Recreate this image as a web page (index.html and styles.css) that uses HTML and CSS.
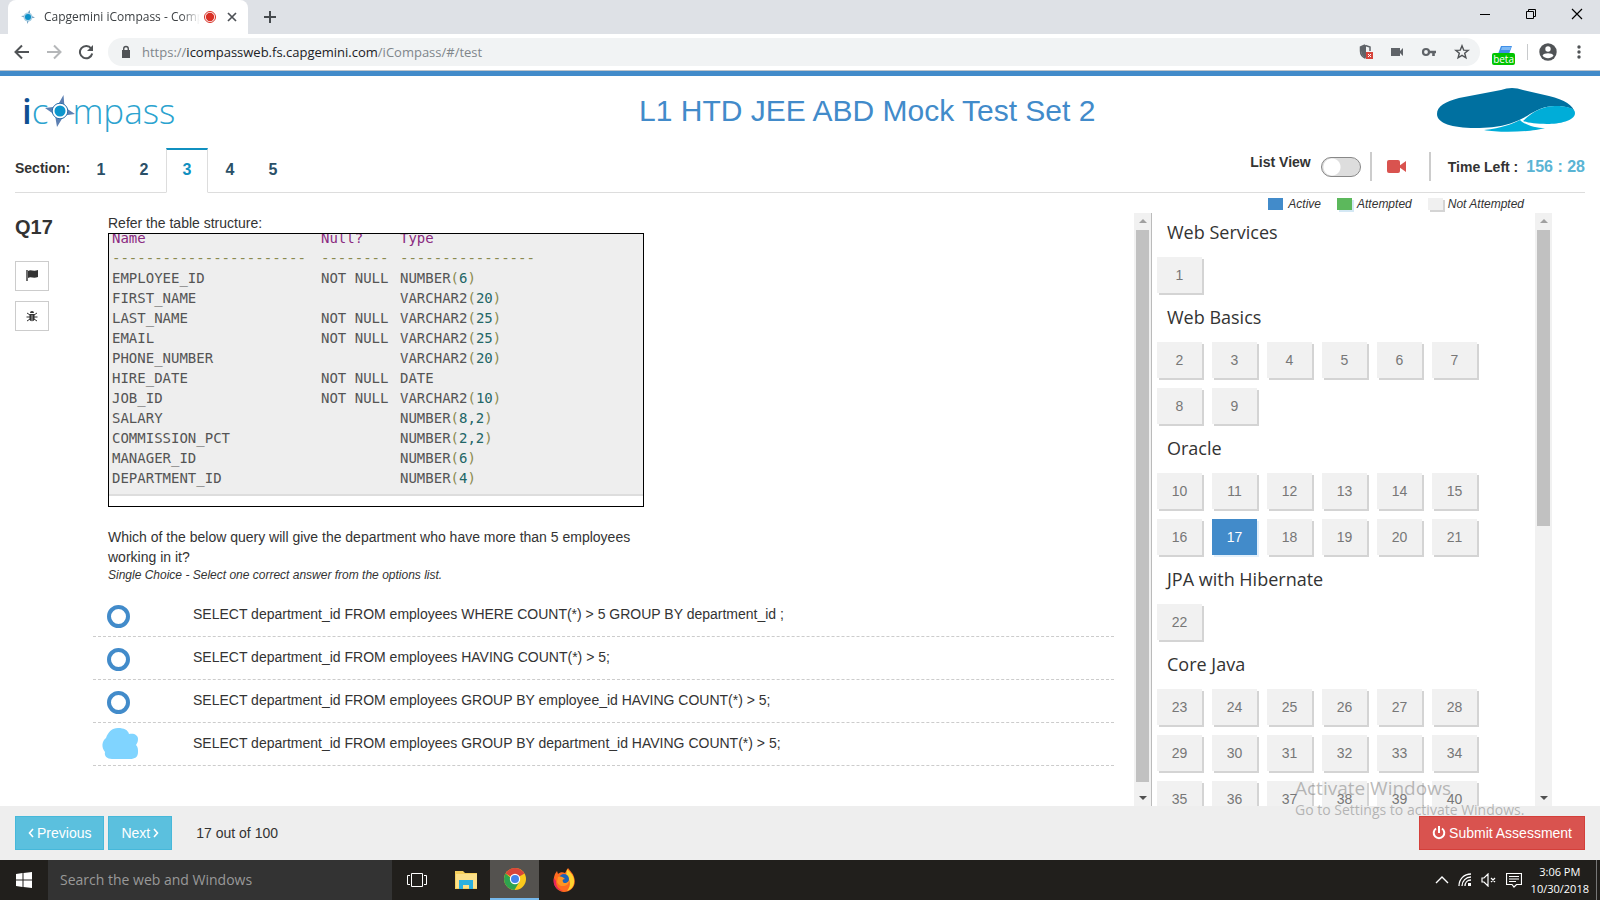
FILE: index.html
```html
<!DOCTYPE html>
<html lang="en">
<head>
<meta charset="utf-8">
<title>Capgemini iCompass - Company Assessment</title>
<link rel="stylesheet" href="styles.css">
</head>
<body>
<div class="screen">
  <header class="browser">
    <div class="tabstrip">
      <div class="tab">
        <svg class="favicon" width="16" height="16" viewBox="0 0 16 16"><path d="M9.500 1l1 5.500 4.500 2-5.500 1L7.500 15l-1-5.500L1 7l5.500-.5z" fill="#5b8fb5"/><circle cx="8" cy="8" r="4.500" fill="#a8cfe4"/><circle cx="8" cy="8" r="3" fill="#0c90c8"/></svg>
        <span class="tab-title">Capgemini iCompass - Comp</span>
        <svg width="14" height="14" viewBox="0 0 14 14"><circle cx="7" cy="7" r="5.500" fill="#fff" stroke="#d93025"/><circle cx="7" cy="7" r="4.200" fill="#d93025"/></svg>
        <button class="icon-btn" aria-label="Close tab"><svg width="12" height="12" viewBox="0 0 12 12"><path d="M2 2l8 8M10 2l-8 8" stroke="#4d5156" stroke-width="1.700"/></svg></button>
      </div>
      <button class="icon-btn new-tab" aria-label="New tab"><svg width="14" height="14" viewBox="0 0 14 14"><path d="M7 1v12M1 7h12" stroke="#45494d" stroke-width="2"/></svg></button>
      <div class="window-controls">
        <button class="icon-btn" aria-label="Minimize"><svg width="12" height="12" viewBox="0 0 12 12"><path d="M1 6.500h10" stroke="#000"/></svg></button>
        <button class="icon-btn" aria-label="Restore"><svg width="12" height="12" viewBox="0 0 12 12"><path d="M1.500 3.500h7v7h-7zM3.500 3V1.500h7v7H9" fill="none" stroke="#000"/></svg></button>
        <button class="icon-btn" aria-label="Close"><svg width="12" height="12" viewBox="0 0 12 12"><path d="M1 1l10 10M11 1L1 11" stroke="#000" stroke-width="1.200"/></svg></button>
      </div>
    </div>
    <div class="toolbar">
      <button class="icon-btn" aria-label="Back"><svg width="16" height="16" viewBox="0 0 16 16"><path d="M15 8H2M8 1.500L1.500 8 8 14.500" fill="none" stroke="#505356" stroke-width="2"/></svg></button>
      <button class="icon-btn" aria-label="Forward"><svg width="16" height="16" viewBox="0 0 16 16"><path d="M1 8h13M8 1.500L14.500 8 8 14.500" fill="none" stroke="#b5b7b9" stroke-width="2"/></svg></button>
      <button class="icon-btn" aria-label="Reload"><svg width="16" height="16" viewBox="0 0 16 16"><path d="M13.200 4.500A6.200 6.200 0 1 0 14.200 9.500" fill="none" stroke="#505356" stroke-width="2"/><path d="M15 1v6H9z" fill="#505356"/></svg></button>
      <div class="omnibox">
        <svg width="12" height="14" viewBox="0 0 12 14"><path d="M2 5h8v8H2z" fill="#505356"/><path d="M3.700 6V3.800a2.300 2.300 0 0 1 4.600 0V6" fill="none" stroke="#505356" stroke-width="1.400"/></svg>
        <div class="url" role="textbox" contenteditable="true" spellcheck="false" aria-label="Address"><span>https://</span><span class="host">icompassweb.fs.capgemini.com</span><span>/iCompass/#/test</span></div>
        <div class="omni-icons">
          <svg width="14" height="16" viewBox="0 0 14 16"><path d="M7 1L2 3v4c0 3 2 6 5 7" fill="#5f6368"/><path d="M6 1L1.500 3v4c0 3.500 2 6 5 7.200M6.500 1.500L11 3v4" fill="none" stroke="#5f6368" stroke-width="1.500"/><path d="M7 8h7v7H7z" fill="#d6453c"/><path d="M9 10l3 3M12 10l-3 3" stroke="#fff"/></svg>
          <svg width="14" height="12" viewBox="0 0 14 12"><path d="M1 2h9v3l3-3v8l-3-3v3H1z" fill="#5f6368"/></svg>
          <svg width="16" height="12" viewBox="0 0 16 12"><circle cx="5" cy="6" r="3" fill="none" stroke="#5f6368" stroke-width="2.200"/><path d="M8 6h7M12.500 6v4" stroke="#5f6368" stroke-width="2.600"/></svg>
          <svg width="16" height="16" viewBox="0 0 16 16"><path d="M8 1.800l1.700 4.300 4.500.3-3.500 2.900 1.200 4.500L8 11.400l-3.900 2.400 1.200-4.500-3.500-2.900 4.500-.3z" fill="none" stroke="#505356" stroke-width="1.400"/></svg>
        </div>
      </div>
      <div class="extension"><svg width="18" height="14" viewBox="0 0 18 14"><path d="M6 3h11l-3 8H3z" fill="#3f8fe8"/><path d="M7 4h9l-1 3H6z" fill="#7db9f5"/></svg><span class="beta">beta</span></div>
      <span class="tool-divider"></span>
      <button class="icon-btn avatar" aria-label="Profile"><svg width="18" height="18" viewBox="0 0 18 18"><circle cx="9" cy="9" r="8.700" fill="#505356"/><circle cx="9" cy="6" r="2.700" fill="#fff"/><path d="M3.500 12.500c1.500-3 9.500-3 11 0-2.500 3.500-8.500 3.500-11 0z" fill="#fff"/></svg></button>
      <button class="icon-btn" aria-label="Menu"><svg width="6" height="16" viewBox="0 0 6 16"><g fill="#505356"><circle cx="3" cy="3" r="1.700"/><circle cx="3" cy="8" r="1.700"/><circle cx="3" cy="13" r="1.700"/></g></svg></button>
    </div>
  </header>

  <main class="app">
    <div class="brand-row">
      <div class="logo" aria-label="icompass"><b>i</b><span>c</span><svg width="30" height="34" viewBox="0 0 30 34"><path d="M18.500 1l1 12L30 20l-11 1.500L12 33l-2-12L0 14l12-1.500z" fill="#5c7fb2"/><circle cx="15" cy="17" r="7.800" fill="#fff" stroke="#2a6ea8"/><circle cx="15" cy="17" r="5.500" fill="#0c95cc"/></svg><span>mpass</span></div>
      <h1 class="title">L1 HTD JEE ABD Mock Test Set 2</h1>
      <svg class="cap-logo" width="138" height="46" viewBox="0 0 138 46"><path d="M0 27C0 19 8 15 22 11L64 3q11-4 22 0l26 6c16 4 24 9 26 17-1-5-9-7-20-7-10 0-19 4-28 10-15 8-25 12-52 12C15 41 0 36 0 27z" fill="#0070a0"/><path d="M86 34c9-9 20-15 32-15 12 0 20 2 20 7 0 8-16 11-28 11-11 0-19-1-24-3z" fill="#00add8"/><path d="M47 43c18-2 28-6 36-10 5 5 15 8 25 8-13 4-46 5-61 2z" fill="#00add8"/></svg>
    </div>

    <div class="section-row">
      <span class="section-label">Section:</span>
      <nav class="section-tabs">
        <a href="#s1">1</a><a href="#s2">2</a><a href="#s3" class="current">3</a><a href="#s4">4</a><a href="#s5">5</a>
      </nav>
      <div class="status">
        <label class="list-view"><span>List View</span><input type="checkbox" class="switch"></label>
        <span class="camera"><svg width="20" height="14" viewBox="0 0 20 14"><rect x="0" y="0" width="13" height="13" rx="2" fill="#d9534f"/><path d="M12 6l7-5v11l-7-5z" fill="#d9534f"/></svg></span>
        <span class="time-label">Time Left :</span>
        <span class="time">156 : 28</span>
      </div>
    </div>

    <div class="legend">
      <span><i class="swatch active"></i>Active</span>
      <span><i class="swatch attempted"></i>Attempted</span>
      <span><i class="swatch"></i>Not Attempted</span>
    </div>

    <div class="work">
      <aside class="q-tools">
        <h2>Q17</h2>
        <button aria-label="Flag question"><svg width="12" height="12" viewBox="0 0 12 12"><path d="M1 0v11" stroke="#333" stroke-width="1.400"/><path d="M2 1c3-2 5 1 10-1v7c-5 2-7-1-10 1z" fill="#333"/></svg></button>
        <button aria-label="Report a problem"><svg width="12" height="12" viewBox="0 0 12 12"><path d="M4 3a2 2 0 0 1 4 0z" fill="#333"/><path d="M3.500 4h5v5c0 3-5 3-5 0z" fill="#333"/><path d="M1 3l3 2M11 3L8 5M0.500 7h11M1 11l3-2M11 11l-3-2" stroke="#333"/><path d="M6 5v6" stroke="#fff" stroke-width=".6"/></svg></button>
      </aside>
      <section class="question">
        <div class="q-body">
          <p>Refer the table structure:</p>
          <div class="schema">
            <table>
              <thead>
                <tr><th>Name</th><th>Null?</th><th>Type</th></tr>
                <tr class="rule"><td>-----------------------</td><td>--------</td><td>----------------</td></tr>
              </thead>
              <tbody>
                <tr><td>EMPLOYEE_ID</td><td>NOT NULL</td><td>NUMBER<i>(</i><b>6</b><i>)</i></td></tr>
                <tr><td>FIRST_NAME</td><td></td><td>VARCHAR2<i>(</i><b>20</b><i>)</i></td></tr>
                <tr><td>LAST_NAME</td><td>NOT NULL</td><td>VARCHAR2<i>(</i><b>25</b><i>)</i></td></tr>
                <tr><td>EMAIL</td><td>NOT NULL</td><td>VARCHAR2<i>(</i><b>25</b><i>)</i></td></tr>
                <tr><td>PHONE_NUMBER</td><td></td><td>VARCHAR2<i>(</i><b>20</b><i>)</i></td></tr>
                <tr><td>HIRE_DATE</td><td>NOT NULL</td><td>DATE</td></tr>
                <tr><td>JOB_ID</td><td>NOT NULL</td><td>VARCHAR2<i>(</i><b>10</b><i>)</i></td></tr>
                <tr><td>SALARY</td><td></td><td>NUMBER<i>(</i><b>8,2</b><i>)</i></td></tr>
                <tr><td>COMMISSION_PCT</td><td></td><td>NUMBER<i>(</i><b>2,2</b><i>)</i></td></tr>
                <tr><td>MANAGER_ID</td><td></td><td>NUMBER<i>(</i><b>6</b><i>)</i></td></tr>
                <tr><td>DEPARTMENT_ID</td><td></td><td>NUMBER<i>(</i><b>4</b><i>)</i></td></tr>
              </tbody>
            </table>
          </div>
          <p class="ask">Which of the below query will give the department who have more than 5 employees working in it?</p>
          <p class="hint">Single Choice - Select one correct answer from the options list.</p>
        </div>
        <div class="options">
          <label><input type="radio" name="answer"><span>SELECT department_id FROM employees WHERE COUNT(*) &gt; 5 GROUP BY department_id ;</span></label>
          <label><input type="radio" name="answer"><span>SELECT department_id FROM employees HAVING COUNT(*) &gt; 5;</span></label>
          <label><input type="radio" name="answer"><span>SELECT department_id FROM employees GROUP BY employee_id HAVING COUNT(*) &gt; 5;</span></label>
          <label class="marked"><input type="radio" name="answer"><span>SELECT department_id FROM employees GROUP BY department_id HAVING COUNT(*) &gt; 5;</span>
            <svg class="blob" width="38" height="34" viewBox="0 0 38 34"><path d="M5 11C7 5 11 1 17 1c6 0 10 2 11 6 5-1 9 1 9 5 0 3-1 4-2 6 2 2 2 4 2 7 0 5-3 7-8 7H11c-5 0-8-3-7-7-4-5-3-11 1-14z" fill="#80d4ff"/></svg></label>
        </div>
      </section>
      <div class="scrollbar main-scroll" aria-hidden="true"><i class="up"></i><i class="thumb"></i><i class="down"></i></div>
      <aside class="palette">
        <div class="groups" id="groups"></div>
      </aside>
      <div class="scrollbar side-scroll" aria-hidden="true"><i class="up"></i><i class="thumb"></i><i class="down"></i></div>
    </div>

    <footer class="pager">
      <button class="info"><svg width="6" height="10" viewBox="0 0 6 10"><path d="M5 1L1.500 5 5 9" fill="none" stroke="#fff" stroke-width="1.600"/></svg>Previous</button>
      <button class="info">Next<svg width="6" height="10" viewBox="0 0 6 10"><path d="M1 1l3.500 4L1 9" fill="none" stroke="#fff" stroke-width="1.600"/></svg></button>
      <span class="count">17 out of 100</span>
      <button class="danger"><svg width="14" height="14" viewBox="0 0 14 14"><path d="M4 2.500a5.300 5.300 0 1 0 6 0" fill="none" stroke="#fff" stroke-width="2"/><path d="M7 0v7" stroke="#fff" stroke-width="2"/></svg>Submit Assessment</button>
    </footer>
  </main>

  <footer class="taskbar">
    <button class="start" aria-label="Start"><svg width="16" height="16" viewBox="0 0 16 16"><path d="M0 2l6.500-1v6.500H0zM7.500 1L16 0v7.500H7.500zM0 8.500h6.500V15L0 14zM7.500 8.500H16V16l-8.500-1z" fill="#fff"/></svg></button>
    <input class="search" type="text" placeholder="Search the web and Windows" aria-label="Search the web and Windows">
    <button class="app-btn" aria-label="Task view"><svg width="20" height="16" viewBox="0 0 20 16"><path d="M4.500 1.500h11v13h-11zM3 3.500H.5v9H3M17 3.500h2.500v9H17" fill="none" stroke="#fff"/></svg></button>
    <button class="app-btn" aria-label="File Explorer"><svg width="22" height="20" viewBox="0 0 22 20"><path d="M0 1h8l2 2h12v16H0z" fill="#f5cf5c"/><path d="M1 4h21v14H1z" fill="#fbe08a"/><path d="M4 19v-9h14v9h-4v-4H8v4z" fill="#29b0e0"/></svg></button>
    <button class="app-btn open" aria-label="Chrome"><svg width="22" height="22" viewBox="0 0 22 22"><circle cx="11" cy="11" r="11" fill="#fbc91c"/><path d="M11 11L1.500 5.500a11 11 0 0 1 19 0z" fill="#d8453a"/><path d="M1.500 5.500A11 11 0 0 0 10.500 22l5-8.500H11z" fill="#2ea24f"/><circle cx="11" cy="11" r="5.200" fill="#fff"/><circle cx="11" cy="11" r="4" fill="#4583ec"/></svg></button>
    <button class="app-btn" aria-label="Firefox"><svg width="22" height="24" viewBox="0 0 22 24"><path d="M2 6l2-3 1 3c2-2 5-2 7-1l3-5c2 3 5 5 6 9 3 9-3 15-10 15S-2 16 2 6z" fill="#ff6a1f"/><path d="M14 1c3 3 8 7 7 14-1 5-4 7-7 8 5-6 3-12-1-15z" fill="#ffd22e"/><circle cx="11" cy="11" r="5" fill="#1d62b8"/><path d="M5 9c3-1 5 0 7 2-2 0-3 1-2 3s4 1 6-1c0 5-9 8-12 1z" fill="#ff9422"/><path d="M1 10c-2 7 3 13 9 13-5-2-7-5-7-10z" fill="#e8245c"/></svg></button>
    <div class="tray">
      <svg width="14" height="10" viewBox="0 0 14 10"><path d="M1 8l6-6 6 6" fill="none" stroke="#fff" stroke-width="1.400"/></svg>
      <svg width="14" height="14" viewBox="0 0 14 14"><path d="M1 13C1 6 6 1 13 1M4 13c0-5 4-9 9-9M7 13c0-3 2-6 6-6" fill="none" stroke="#fff" stroke-width="1.300"/><path d="M10 10h3v3h-3z" fill="#fff"/></svg>
      <svg width="16" height="14" viewBox="0 0 16 14"><path d="M1 5h2l4-4v12L3 9H1zM10 5l4 4M14 5l-4 4" fill="none" stroke="#fff" stroke-width="1.200"/></svg>
      <svg width="16" height="16" viewBox="0 0 16 16"><path d="M.5 1.500h15v11h-5L8 15l-2-2.500H.5zM3 4.500h10M3 7h10M3 9.500h7" fill="none" stroke="#fff" stroke-width="1.200"/></svg>
      <time class="clock">3:06 PM<br>10/30/2018</time>
      <span class="peek"></span>
    </div>
  </footer>

  <div class="watermark"><p class="big">Activate Windows</p><p>Go to Settings to activate Windows.</p></div>
</div>
<script src="palette.js"></script>
</body>
</html>
```
FILE: styles.css
```css
* { box-sizing: border-box; }
body { margin: 0; background: #fff; color: #333; font: 14px/20px "Liberation Sans", Arial, sans-serif; }
h1, h2, h3, p { margin: 0; font-weight: 400; }
button { font: inherit; cursor: pointer; }
svg { display: block; flex: none; }
.screen { position: relative; display: flex; flex-direction: column; height: 100vh; overflow: hidden; }
.icon-btn { border: 0; padding: 0; background: none; }

/* Browser chrome */
.browser { flex: none; font-family: "Open Sans", sans-serif; }
.tabstrip { display: flex; align-items: center; height: 34px; padding-left: 8px; background: #dee1e6; }
.tab { display: flex; align-items: center; width: 240px; height: 34px; padding: 0 10px 0 12px; background: #fff; border-radius: 8px 8px 0 0; }
.tab-title { flex: 1; margin: 0 3px 0 8px; overflow: hidden; white-space: nowrap; font-size: 12px; color: #3c4043; mask-image: linear-gradient(90deg, #000 88%, transparent); }
.tab .icon-btn { margin-left: 9px; }
.new-tab { margin-left: 15px; }
.window-controls { display: flex; gap: 34px; margin-left: auto; padding: 0 17px 6px 0; }
.toolbar { display: flex; align-items: center; gap: 16px; height: 37px; padding: 0 18px 1px 14px; border-bottom: 1px solid #bcc4cc; }
.omnibox { display: flex; flex: 1; align-items: center; height: 28px; margin: 0 -4px 0 -2px; padding: 0 10px 0 12px; border-radius: 14px; background: #f1f3f4; }
.url { flex: 1; margin-left: 10px; outline: 0; color: #80868b; font-size: 13px; white-space: nowrap; }
.host { color: #202124; }
.omni-icons { display: flex; align-items: center; gap: 17px; }
.extension { display: flex; flex-direction: column; align-items: center; padding-top: 4px; }
.beta { margin-top: -4px; padding: 0 1px; border-radius: 2px; background: #00c400; color: #fff; font-size: 10px; line-height: 12px; }
.tool-divider { width: 1px; height: 16px; margin: 0 -2px 0 -4px; background: #c8cacc; }
.avatar { margin: 0 3px 0 -3px; }

/* Page header */
.app { display: flex; flex: 1; flex-direction: column; min-height: 0; border-top: 5px solid #428bca; }
.brand-row { display: grid; grid-template-columns: 615fr auto 478fr; align-items: center; height: 72px; padding: 0 25px 2px 22px; }
.logo { display: flex; align-items: center; height: 40px; font: 300 35px/40px "Open Sans", sans-serif; color: #2ba3cf; }
.logo b { color: #0e4f92; font-weight: 600; }
.logo svg { margin: 0 -3px 0 -3px; }
.title { font-size: 30px; line-height: 36px; color: #428bca; }
.cap-logo { justify-self: end; margin-bottom: 2px; }
.section-row { display: flex; align-items: flex-start; height: 45px; margin: 0 15px; border-bottom: 1px solid #ddd; font-weight: 700; }
.section-label { width: 65px; padding-top: 10px; }
.section-tabs { display: flex; gap: 1px; }
.section-tabs a { width: 42px; height: 45px; padding-top: 10px; border: 1px solid transparent; border-top-width: 2px; color: #2a5068; font-size: 16px; line-height: 20px; text-align: center; text-decoration: none; }
.section-tabs .current { border-color: #1090c0 #ddd transparent; background: #fff; color: #1090c0; }
.status { display: flex; align-items: center; margin-left: auto; padding-top: 4px; }
.list-view { display: flex; gap: 10px; padding-bottom: 4px; }
.switch { appearance: none; width: 40px; height: 20px; margin: 5px 9px 0 0; border: 1px solid #888; border-radius: 10px; background: radial-gradient(circle at 10px 9px, #fff 8px, transparent 9px), #ddd; }
.camera { display: flex; align-items: center; height: 29px; padding: 0 22px 0 15px; border: solid #ccc; border-width: 0 2px; }
.time-label { margin-left: 17px; }
.time { margin-left: 8px; color: #5ab4d4; font-size: 16px; }
.legend { display: flex; gap: 16px; justify-content: flex-end; height: 20px; padding: 1px 76px 0 0; font-size: 12px; font-style: italic; }
.legend span { display: flex; align-items: center; gap: 5px; }
.swatch { width: 15px; height: 12px; background: #f0f0f0; box-shadow: 2px 2px #d4d4d4; }
.swatch.active { background: #428bca; box-shadow: none; }
.swatch.attempted { background: #5cb85c; box-shadow: 2px 2px #d4e8f4; }

/* Question */
.work { display: flex; flex: 1; min-height: 0; }
.q-tools { display: flex; flex-direction: column; gap: 10px; width: 93px; padding: 4px 0 0 15px; }
.q-tools h2 { margin-bottom: 14px; font-size: 20px; font-weight: 700; line-height: 20px; }
.q-tools button { display: grid; place-items: center; width: 34px; height: 30px; border: 1px solid #ccc; background: #fff; }
.question { flex: 1; min-width: 0; padding-right: 20px; }
.q-body { max-width: 566px; padding: 0 15px; }
.schema { height: 274px; border: 1px solid #000; overflow: hidden; }
.schema table { width: 100%; margin-top: -6px; border-collapse: collapse; table-layout: fixed; border-bottom: 2px solid #ddd; background: #eee; font: 14px/20px "DejaVu Sans Mono", monospace; color: #555; }
.schema th, .schema td { height: 20px; padding: 0; font-weight: 400; text-align: left; white-space: nowrap; }
.schema th { color: #8a2a80; }
.schema th:nth-child(1) { width: 212px; }
.schema th:nth-child(2) { width: 79px; }
.schema th:first-child, .schema td:first-child { padding-left: 3px; }
.schema tr:last-child td { height: 26px; padding-bottom: 6px; }
.schema .rule td, .schema .rule:last-child td { height: 20px; padding-bottom: 0; color: #8a8a50; }
.schema b { color: #266; font-weight: 400; }
.schema i { color: #8a8a50; font-style: normal; }
.ask { margin-top: 20px; }
.hint { font-size: 12px; line-height: 16px; font-style: italic; }
.options { padding-top: 11px; }
.options label { position: relative; display: flex; align-items: center; height: 43px; padding: 0 0 2px 14px; border-bottom: 1px dashed #ccc; }
.options input { appearance: none; width: 23px; height: 23px; margin: 4px 63px 0 0; border: 4px solid #428bca; border-radius: 50%; }
.options .marked input { visibility: hidden; }
.blob { position: absolute; left: 8px; top: 4px; }

/* Scrollbars */
.scrollbar { display: flex; flex: none; flex-direction: column; align-items: center; width: 17px; padding: 6px 0; background: #f1f1f1; }
.scrollbar i { flex: none; }
.scrollbar .up { border: 4px solid transparent; border-top: 0; border-bottom-color: #a0a0a0; margin-bottom: 7px; }
.scrollbar .down { margin-top: auto; border: 4px solid transparent; border-bottom: 0; border-top-color: #505050; }
.thumb { width: 13px; background: #c1c1c1; }
.main-scroll .thumb { height: 95%; }
.side-scroll .thumb { height: 51%; }
.side-scroll { margin-right: 48px; }

/* Question palette */
.palette { width: 384px; border-left: 1px solid #bbb; overflow: hidden; }
.groups { padding: 5px 0 0 5px; }
.group h3 { height: 39px; padding: 1px 0 0 10px; font: 18px/26px "Open Sans", sans-serif; }
.cells { display: grid; grid-template-columns: repeat(6, 45px); gap: 10px; padding-bottom: 10px; }
.cells button { height: 36px; padding: 0; border: 0; background: #f1f1f1; box-shadow: 2px 2px #d4d4d4; color: #777; }
.cells .here { background: #428bca; box-shadow: 2px 2px #e4f0fa; color: #fff; }

/* Pager */
.pager { display: flex; flex: none; align-items: center; gap: 4px; height: 54px; padding: 0 15px; background: #eee; }
.pager button { display: flex; align-items: center; gap: 3px; height: 34px; padding: 0 12px; border: 1px solid; color: #fff; }
.pager .info { border-color: #46b8da; background: #5bc0de; }
.pager .danger { margin-left: auto; border-color: #d43f3a; background: #d9534f; }
.count { margin-left: 20px; }

/* Taskbar */
.taskbar { display: flex; flex: none; height: 40px; background: #211f1c; color: #fff; font-family: "Open Sans", sans-serif; }
.start, .app-btn { display: grid; place-items: center; width: 49px; padding: 0; border: 0; background: none; }
.start { width: 48px; }
.search { width: 344px; padding: 0 12px; border: 0; background: #333; color: #fff; font: 14px/20px "Open Sans", sans-serif; }
.search::placeholder { color: #999; opacity: 1; }
.app-btn.open { border-bottom: 2px solid #76b9ed; background: #54524f; }
.tray { display: flex; align-items: center; gap: 9px; margin-left: auto; }
.clock { font-size: 11px; line-height: 17px; text-align: center; }
.peek { width: 4px; height: 100%; margin-left: -2px; border-left: 1px solid #777; }
.watermark { position: absolute; left: 1295px; bottom: 80px; color: rgba(120, 120, 120, .5); font-family: "Open Sans", sans-serif; pointer-events: none; white-space: nowrap; }
.watermark .big { font-size: 19px; line-height: 24px; }
```
FILE: palette.js
```js
const groups = [
  ["Web Services", 1, 1],
  ["Web Basics", 2, 9],
  ["Oracle", 10, 21],
  ["JPA with Hibernate", 22, 22],
  ["Core Java", 23, 40]
];
const current = 17;
const root = document.getElementById("groups");
for (const [name, first, last] of groups) {
  const group = document.createElement("section");
  group.className = "group";
  const heading = document.createElement("h3");
  heading.textContent = name;
  const cells = document.createElement("div");
  cells.className = "cells";
  for (let n = first; n <= last; n++) {
    const cell = document.createElement("button");
    cell.textContent = n;
    if (n === current) cell.className = "here";
    cells.append(cell);
  }
  group.append(heading, cells);
  root.append(group);
}
```
